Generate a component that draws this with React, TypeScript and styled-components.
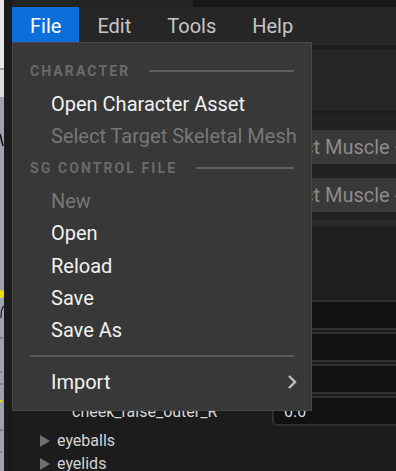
import React from "react";
import styled, { createGlobalStyle } from "styled-components";

const Global = createGlobalStyle`
  html, body { margin: 0; padding: 0; background: #1c1c1c; overflow: hidden; }
  body { font-family: Roboto, "Liberation Sans", sans-serif; }
  * { box-sizing: border-box; }
`;

const Frame = styled.div`
  display: flex;
  width: 396px;
  height: 471px;
  overflow: hidden;
`;

const ViewportEdge = styled.svg`
  flex: 0 0 4px;
  width: 4px;
  height: 471px;
  display: block;
`;

const Splitter = styled.div`
  flex: 0 0 8px;
  background: #1a1a1a;
`;

const Main = styled.div`
  position: relative;
  flex: 1;
  display: flex;
  flex-direction: column;
  background: #1c1c1c;
  overflow: hidden;
`;

const TopStrip = styled.div`
  display: flex;
  flex-shrink: 0;
  height: 7px;
`;

const TopTab = styled.div<{ $w?: number; $bg: string }>`
  flex: ${(p) => (p.$w ? `0 0 ${p.$w}px` : "1")};
  background: ${(p) => p.$bg};
`;

const MenuBar = styled.div`
  display: flex;
  flex-shrink: 0;
  height: 38px;
  background: #262626;
`;

const MenuTitle = styled.div<{ $active?: boolean }>`
  display: flex;
  align-items: center;
  padding: 0 18px;
  font-size: 20px;
  color: ${(p) => (p.$active ? "#ffffff" : "#c6c6c6")};
  background: ${(p) => (p.$active ? "#0c6fd9" : "transparent")};
`;

const Body = styled.div`
  display: flex;
  flex-direction: column;
  padding-top: 5px;
  & > * { flex-shrink: 0; }
`;

const Toolbar = styled.div`
  height: 60px;
  background: #262626;
  margin-bottom: 4px;
`;

const ButtonsPanel = styled.div`
  display: flex;
  flex-direction: column;
  gap: 14px;
  padding: 16px 0 8px 18px;
  background: #222222;
`;

const ActionButton = styled.div`
  height: 34px;
  flex-shrink: 0;
  display: flex;
  align-items: center;
  padding-left: 235px;
  background: #393939;
  color: #8b8b8b;
  font-size: 20px;
  white-space: nowrap;
  overflow: hidden;
`;

const PanelEdge = styled.div`
  height: 6px;
  background: #2a2a2a;
`;

const TableHeader = styled.div`
  height: 74px;
  background: #1e1e1e;
`;

const Rows = styled.div`
  display: flex;
  flex-direction: column;
  gap: 2px;
  background: #1a1a1a;
`;

const Row = styled.div`
  display: flex;
  flex-shrink: 0;
  height: 30px;
  background: #1c1c1c;
`;

const RowLabel = styled.div`
  flex: 0 0 260px;
  display: flex;
  align-items: center;
  padding-left: 60px;
  font-size: 16px;
  color: #d8d8d8;
  white-space: nowrap;
  overflow: hidden;
`;

const ValueBox = styled.div`
  flex: 1;
  display: flex;
  align-items: center;
  padding-left: 10px;
  background: #111111;
  border: 2px solid #303030;
  border-right: none;
  border-radius: 5px 0 0 5px;
  font-size: 16px;
  color: #dcdcdc;
`;

const Tree = styled.div`
  display: flex;
  flex-direction: column;
  padding-top: 3px;
`;

const TreeItem = styled.div`
  display: flex;
  flex-shrink: 0;
  align-items: center;
  height: 23px;
  padding-left: 28px;
  gap: 7px;
  font-size: 16px;
  color: #d4d4d4;
`;

const Caret = styled.span`
  width: 0;
  height: 0;
  border-top: 6px solid transparent;
  border-bottom: 6px solid transparent;
  border-left: 10px solid #6f6f6f;
`;

const Dropdown = styled.div`
  position: absolute;
  left: 0;
  top: 42px;
  width: 300px;
  display: flex;
  flex-direction: column;
  padding: 12px 0;
  background: #383838;
  border: 1px solid #474747;
`;

const SectionHeader = styled.div`
  height: 32.4px;
  display: flex;
  align-items: center;
  padding: 0 17px;
  font-size: 14px;
  font-weight: 700;
  letter-spacing: 2.1px;
  color: #6a6a6a;
  &::after {
    content: "";
    flex: 1;
    height: 2px;
    margin-left: 19px;
    background: #5e5e5e;
  }
`;

const MenuItem = styled.div<{ $disabled?: boolean }>`
  height: 32.4px;
  display: flex;
  align-items: center;
  justify-content: space-between;
  padding: 0 13px 0 38px;
  font-size: 20px;
  white-space: nowrap;
  color: ${(p) => (p.$disabled ? "#777777" : "#f2f2f2")};
`;

const Separator = styled.div`
  height: 19px;
  display: flex;
  align-items: center;
  padding: 0 17px;
  &::after {
    content: "";
    flex: 1;
    height: 2px;
    background: #5a5a5a;
  }
`;

const Chevron = () => (
  <svg width="12" height="16" viewBox="0 0 12 16">
    <polyline points="3,2 9,8 3,14" fill="none" stroke="#bdbdbd" strokeWidth="2.4" />
  </svg>
);

export default function App() {
  return (
    <>
      <Global />
      <Frame>
        <ViewportEdge viewBox="0 0 4 471" preserveAspectRatio="none">
          <rect x="0" y="0" width="4" height="68" fill="#e6e6e6" />
          <rect x="0" y="68" width="4" height="2" fill="#a3a3a3" />
          <rect x="0" y="70" width="4" height="27" fill="#dcdcdc" />
          <rect x="0" y="97" width="4" height="374" fill="#9ca2ae" />
          <path d="M0 134 L3 146" stroke="#111" strokeWidth="1.6" />
          <circle cx="0.5" cy="294" r="4" fill="#e6e000" />
          <path d="M4 306 Q1 308 1 318" stroke="#151515" strokeWidth="1.2" fill="none" />
          <path d="M0 338 H3 M0 372 H2 M0 384 H3 M0 430 H3 M0 452 H2" stroke="#5b5f66" strokeWidth="1" />
          <circle cx="1" cy="401" r="1.4" fill="#e6e000" />
        </ViewportEdge>
        <Splitter />
        <Main>
          <TopStrip>
            <TopTab $w={181} $bg="#232323" />
            <TopTab $bg="#171717" />
          </TopStrip>
          <MenuBar>
            <MenuTitle $active>File</MenuTitle>
            <MenuTitle>Edit</MenuTitle>
            <MenuTitle>Tools</MenuTitle>
            <MenuTitle>Help</MenuTitle>
          </MenuBar>
          <Body>
            <Toolbar />
            <ButtonsPanel>
              <ActionButton>Select Muscle +</ActionButton>
              <ActionButton>Select Muscle -</ActionButton>
            </ButtonsPanel>
            <PanelEdge />
            <TableHeader />
            <Rows>
              <Row>
                <RowLabel>cheek_raise_inner_L</RowLabel>
                <ValueBox>0.0</ValueBox>
              </Row>
              <Row>
                <RowLabel>cheek_raise_inner_R</RowLabel>
                <ValueBox>0.0</ValueBox>
              </Row>
              <Row>
                <RowLabel>cheek_raise_outer_L</RowLabel>
                <ValueBox>0.0</ValueBox>
              </Row>
              <Row>
                <RowLabel>cheek_raise_outer_R</RowLabel>
                <ValueBox>0.0</ValueBox>
              </Row>
            </Rows>
            <Tree>
              <TreeItem>
                <Caret />
                eyeballs
              </TreeItem>
              <TreeItem>
                <Caret />
                eyelids
              </TreeItem>
            </Tree>
          </Body>
          <Dropdown>
            <SectionHeader>CHARACTER</SectionHeader>
            <MenuItem>Open Character Asset</MenuItem>
            <MenuItem $disabled>Select Target Skeletal Mesh</MenuItem>
            <SectionHeader>SG CONTROL FILE</SectionHeader>
            <MenuItem $disabled>New</MenuItem>
            <MenuItem>Open</MenuItem>
            <MenuItem>Reload</MenuItem>
            <MenuItem>Save</MenuItem>
            <MenuItem>Save As</MenuItem>
            <Separator />
            <MenuItem>
              Import
              <Chevron />
            </MenuItem>
          </Dropdown>
        </Main>
      </Frame>
    </>
  );
}
